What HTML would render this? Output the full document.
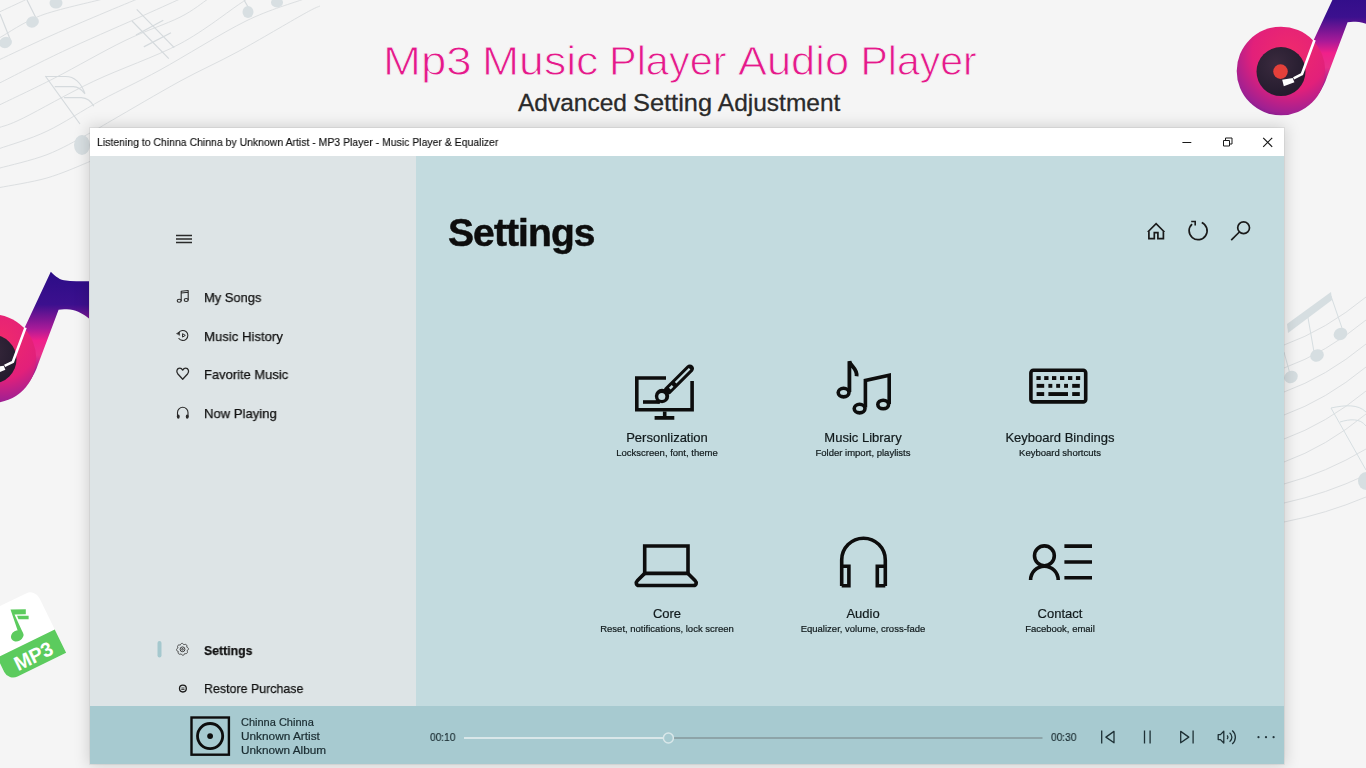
<!DOCTYPE html>
<html><head><meta charset="utf-8">
<style>
html,body{margin:0;padding:0;}
body{width:1366px;height:768px;overflow:hidden;position:relative;background:#f5f5f5;font-family:"Liberation Sans",sans-serif;}
.abs{position:absolute;white-space:nowrap;will-change:transform;}
#bgsvg{position:absolute;left:0;top:0;}
.w1{position:absolute;top:37px;font-size:41px;color:#e5198a;line-height:48px;-webkit-text-stroke:0.9px #f5f5f5;white-space:nowrap;transform-origin:0 0;}
.w2{position:absolute;top:88.7px;font-size:24.5px;color:#2a2a2a;-webkit-text-stroke:0.3px #2a2a2a;line-height:28px;white-space:nowrap;transform-origin:0 0;}
#win{position:absolute;left:90px;top:128px;width:1194px;height:636px;box-shadow:0 0 0 1px rgba(0,0,0,0.05),0 0 14px 2px rgba(0,0,0,0.15);background:#c3dbdf;}
#titlebar{position:absolute;left:0;top:0;width:1194px;height:28px;background:#fff;}
#wtitle{left:7px;top:6.5px;font-size:11.5px;line-height:14px;color:#111;transform:scaleX(0.91);transform-origin:0 0;-webkit-text-stroke:0.15px #111;}
#side{position:absolute;left:0;top:28px;width:326px;height:550px;background:#dde4e6;}
#player{position:absolute;left:0;top:578px;width:1194px;height:58px;background:#a7cad0;}
.nav{font-size:13.5px;line-height:20px;color:#111;transform-origin:0 0;-webkit-text-stroke:0.25px #111;}
.tt{font-size:13px;color:#111a1c;-webkit-text-stroke:0.2px #111a1c;text-align:center;width:200px;}
.ts{font-size:9.5px;color:#111a1c;-webkit-text-stroke:0.2px #111a1c;text-align:center;width:200px;}
.pt{font-size:11px;color:#1a2c31;-webkit-text-stroke:0.2px #1a2c31;}
#icons{position:absolute;left:0;top:0;}
</style></head><body>
<svg id="bgsvg" width="1366" height="768" viewBox="0 0 1366 768">
 <defs>
  <radialGradient id="ringg" cx="0.6" cy="0.3" r="0.85">
   <stop offset="0" stop-color="#f02a6c"/>
   <stop offset="0.5" stop-color="#e2207a"/>
   <stop offset="0.8" stop-color="#a02092"/>
   <stop offset="1" stop-color="#55198a"/>
  </radialGradient>
  <linearGradient id="stemg" x1="0" y1="-90" x2="0" y2="30" gradientUnits="userSpaceOnUse">
   <stop offset="0" stop-color="#2a0c86"/>
   <stop offset="0.3" stop-color="#3c108e"/>
   <stop offset="0.5" stop-color="#a81a98"/>
   <stop offset="0.6" stop-color="#f0208a"/>
   <stop offset="0.72" stop-color="#e8308a"/>
   <stop offset="0.86" stop-color="#9a2090"/>
   <stop offset="1" stop-color="#4a187e"/>
  </linearGradient>
  <radialGradient id="discg" cx="0.4" cy="0.35" r="0.7">
   <stop offset="0" stop-color="#3a2a3e"/>
   <stop offset="1" stop-color="#221a2c"/>
  </radialGradient>
  <g id="logo">
   <path d="M32.5 -30.5L58.8 -86.9C62 -84 66 -79.5 72 -78.3C80 -77 88 -77.5 97 -77.3V-40C92 -44 86 -48 78 -49C73 -49.5 70 -49.5 66.6 -48.8L46 6Q43.5 14 37.5 23L20 20L20 -20Z" fill="url(#stemg)"/>
   <circle cx="0" cy="0" r="44.3" fill="url(#ringg)"/>
   <circle cx="0" cy="0.6" r="24.5" fill="url(#discg)"/>
   <circle cx="-0.5" cy="0.6" r="7.3" fill="#e4403a"/>
   <path d="M33.5 -31L20.9 3.2L12.6 7.3" fill="none" stroke="#fff" stroke-width="2.6" stroke-linejoin="round"/>
   <path d="M1.2 8.8L11.7 7.1L13.4 11.2L2.8 15.3Z" fill="#fff"/>
  </g>
 </defs>
 <!-- staff lines top-left -->
 <g fill="none" stroke="#dcdfe1" stroke-width="1">
  <path d="M0.0 11.7 C3.9 9.9 18.4 3.2 23.4 0.8 C28.4 -1.6 28.9 -2.4 30.0 -3.0"/>
  <path d="M0.0 37.5 C6.8 33.9 23.4 22.0 40.6 15.6 C57.8 9.2 92.6 1.8 103.0 -1.0"/>
  <path d="M0.0 59.4 C7.8 55.8 31.3 44.5 46.9 37.5 C62.5 30.5 78.7 23.6 93.8 17.2 C108.8 10.8 130.2 2.0 137.5 -1.0"/>
  <path d="M0.0 82.8 C10.4 77.6 39.8 62.3 62.5 51.6 C85.2 40.9 116.4 27.5 136.0 18.8 C155.6 10.0 172.7 2.3 180.0 -1.0"/>
  <path d="M0.0 104.7 C9.1 100.2 33.9 88.7 54.7 78.0 C75.5 67.3 104.1 50.7 125.0 40.6 C145.9 30.5 166.2 24.1 180.0 17.2 C193.8 10.3 203.3 2.0 208.0 -1.0"/>
  <path d="M0.0 127.3 C3.9 125.8 7.8 125.7 23.4 118.0 C39.0 110.3 67.7 93.6 93.8 81.2 C119.8 68.9 155.5 56.8 180.0 43.8 C204.5 30.7 229.3 10.6 241.0 3.0 C252.7 -4.6 248.5 -1.2 250.0 -2.0"/>
  <path d="M0.0 148.4 C7.8 145.5 30.0 139.3 46.9 131.2 C63.8 123.2 82.8 110.2 101.6 100.0 C120.4 89.8 135.9 83.2 160.0 70.0 C184.1 56.8 222.0 32.8 246.0 21.0 C270.0 9.2 294.3 2.7 304.0 -1.0"/>
  <path d="M0.0 168.0 C7.8 165.8 32.3 160.3 46.9 154.7 C61.5 149.1 76.6 140.2 87.5 134.4 C98.4 128.6 97.1 128.9 112.5 120.0 C127.9 111.1 159.1 92.7 180.0 81.2 C200.9 69.8 217.4 62.8 238.0 51.6 C258.6 40.4 290.1 21.6 303.8 14.0 C317.4 6.4 317.3 7.3 320.0 6.0"/>
  <path d="M0.0 187.5 C7.8 185.9 32.3 182.2 46.9 178.0 C61.5 173.8 79.5 165.8 87.5 162.5 C95.5 159.2 93.8 158.8 95.0 158.0"/>
 </g>
 <g fill="none" stroke="#d5dadd" stroke-width="1.2">
  <path d="M136.7 9.4L174.2 47.7M132 21L168.8 58.6M136 35L163.3 20.3M143.8 46.9L171 32.8"/>
  <path d="M45.3 76L80 124M45.3 76.5H65.6C72 76.5 80 80 85 93.8M54.7 86.7H73.4C78 87 82 90 85 93.8M64 97.7H81.3C86 98 91 101 93.8 106.3"/>
  <path d="M10 39L0 14M36 18L27 0M251 12L244 0"/>
 </g>
 <g fill="#d8dfe2">
  <ellipse cx="5.5" cy="42.5" rx="6.5" ry="5.5" transform="rotate(-20 5.5 42.5)"/>
  <ellipse cx="32.5" cy="22" rx="6.5" ry="5.5" transform="rotate(-20 32.5 22)"/>
  <ellipse cx="56" cy="3" rx="6.5" ry="5.5"/>
  <ellipse cx="248" cy="12" rx="5.5" ry="6"/>
  <ellipse cx="277" cy="2.5" rx="6" ry="5"/>
  <ellipse cx="82" cy="145" rx="8" ry="10"/>
 </g>
 <!-- staff lines right -->
 <g fill="none" stroke="#dcdfe1" stroke-width="1">
  <path d="M1284 345 Q1326 329.9 1366 297"/>
  <path d="M1284 368 Q1326 352.9 1366 320"/>
  <path d="M1284 392 Q1326 376.9 1366 344"/>
  <path d="M1284 415 Q1326 399.9 1366 367"/>
  <path d="M1284 439 Q1326 423.9 1366 391"/>
  <path d="M1284 462 Q1326 446.9 1366 414"/>
  <path d="M1284 484 Q1326 472.8 1366 449"/>
  <path d="M1284 503 Q1326 493.9 1366 475"/>
  <path d="M1284 522 Q1326 513.8 1366 497"/>
 </g>
 <g fill="#d6dee1">
  <path d="M1287 324L1331 292L1332 300L1288 333Z"/>
  <ellipse cx="1340.5" cy="334" rx="7" ry="6" transform="rotate(-25 1340.5 334)"/>
  <ellipse cx="1317" cy="355.5" rx="7" ry="6" transform="rotate(-25 1317 355.5)"/>
  <ellipse cx="1291" cy="377" rx="7" ry="6" transform="rotate(-25 1291 377)"/>
  <ellipse cx="1366" cy="481" rx="8" ry="9"/>
 </g>
 <g fill="none" stroke="#d6dee1" stroke-width="1">
  <path d="M1331 296L1343 331M1307 312L1314 352M1284 352L1290 374"/>
  <path d="M1331 408L1366 470M1331 408C1345 405 1358 404 1366 412M1340 422C1350 419 1360 418 1366 426"/>
 </g>
 <!-- logos -->
 <use href="#logo" transform="translate(1281 71)"/>
 <use href="#logo" transform="translate(-8 358.6)"/>
</svg>

<svg id="mp3" width="120" height="140" viewBox="0 560 120 140" style="position:absolute;left:0;top:560px;">
 <g transform="translate(35 589) rotate(-26)">
  <path d="M-64 0H-10A10 10 0 0 1 0 10V71H-54A10 10 0 0 1 -64 61Z" fill="#fff"/>
  <path d="M-64 45H0V71H-54A10 10 0 0 1 -64 61Z" fill="#5ccb5e"/>
  <text x="-51" y="66.5" font-family="Liberation Sans" font-weight="bold" font-size="20" fill="#fff" letter-spacing="-0.3">MP3</text>
 </g>
 <g fill="#5ccb5e">
  <path d="M10.5 609.5L25.8 609.3L25.8 614.3L14.5 614.5L22.5 632L19 634.5Z"/>
  <path d="M17 615.8H28.6V619.3H18.5Z"/>
  <ellipse cx="17.2" cy="635.8" rx="6.6" ry="5.3" transform="rotate(-30 17.2 635.8)"/>
 </g>
</svg>
<div id="title1">
 <span class="w1" style="left:383.3px;transform:scaleX(1.112)">Mp3</span>
 <span class="w1" style="left:482.2px;transform:scaleX(1.087)">Music</span>
 <span class="w1" style="left:608.8px;transform:scaleX(1.011)">Player</span>
 <span class="w1" style="left:737.8px;transform:scaleX(1.059)">Audio</span>
 <span class="w1" style="left:860.5px;">Player</span>
</div>
<div id="title2">
 <span class="w2" style="left:518px;">Advanced</span>
 <span class="w2" style="left:633.4px;transform:scaleX(1.036)">Setting</span>
 <span class="w2" style="left:717.8px;">Adjustment</span>
</div>

<div id="win">
  <div id="titlebar"><div class="abs" id="wtitle">Listening to Chinna Chinna by Unknown Artist - MP3 Player - Music Player &amp; Equalizer</div></div>
  <div id="side"></div>
  <div id="player"></div>
</div>

<!-- text in page coords -->
<div class="abs nav" style="left:203.5px;top:288px;transform:scaleX(0.956)">My Songs</div>
<div class="abs nav" style="left:203.5px;top:327px;transform:scaleX(0.974)">Music History</div>
<div class="abs nav" style="left:203.5px;top:365px;transform:scaleX(0.959)">Favorite Music</div>
<div class="abs nav" style="left:203.5px;top:404px;transform:scaleX(0.97)">Now Playing</div>
<div class="abs nav" style="left:204px;top:641px;font-weight:bold;transform:scaleX(0.91)">Settings</div>
<div class="abs nav" style="left:203.5px;top:679px;transform:scaleX(0.92)">Restore Purchase</div>

<div class="abs" style="left:448px;top:211px;font-size:39px;font-weight:bold;color:#0d0d0d;letter-spacing:-0.9px;-webkit-text-stroke:0.5px #0d0d0d;">Settings</div>

<div class="abs tt" style="left:566.5px;top:430px;">Personlization</div>
<div class="abs ts" style="left:566.5px;top:447px;">Lockscreen, font, theme</div>
<div class="abs tt" style="left:763.4px;top:430px;">Music Library</div>
<div class="abs ts" style="left:763.4px;top:447px;">Folder import, playlists</div>
<div class="abs tt" style="left:960.3px;top:430px;">Keyboard Bindings</div>
<div class="abs ts" style="left:960.3px;top:447px;">Keyboard shortcuts</div>
<div class="abs tt" style="left:566.5px;top:606px;">Core</div>
<div class="abs ts" style="left:566.5px;top:623px;">Reset, notifications, lock screen</div>
<div class="abs tt" style="left:763.4px;top:606px;">Audio</div>
<div class="abs ts" style="left:763.4px;top:623px;">Equalizer, volume, cross-fade</div>
<div class="abs tt" style="left:960.3px;top:606px;">Contact</div>
<div class="abs ts" style="left:960.3px;top:623px;">Facebook, email</div>

<div class="abs pt" style="left:241px;top:716px;">Chinna Chinna</div>
<div class="abs pt" style="left:241px;top:730px;transform:scaleX(1.075);transform-origin:0 0;">Unknown Artist</div>
<div class="abs pt" style="left:241px;top:744px;transform:scaleX(1.07);transform-origin:0 0;">Unknown Album</div>
<div class="abs pt" style="left:430px;top:731px;font-size:11.5px;transform:scaleX(0.88);transform-origin:0 0;">00:10</div>
<div class="abs pt" style="left:1051px;top:731px;font-size:11.5px;transform:scaleX(0.88);transform-origin:0 0;">00:30</div>

<svg id="icons" width="1366" height="768" viewBox="0 0 1366 768">
 <g fill="none" stroke="#1a1a1a" stroke-width="1">
  <!-- title bar controls -->
  <path d="M1182.4 142.5H1191.3"/>
  <path d="M1223.5 140.5h6v5.5h-6z M1225.5 140.5v-2.5h6.5v6h-2.5"/>
  <path d="M1263.2 137.8L1272.2 146.8M1272.2 137.8L1263.2 146.8" stroke-width="1.2"/>
 </g>
 <!-- hamburger -->
 <g stroke="#2a2a2a" stroke-width="1.3">
  <path d="M176 235.5H192M176 239H192M176 242.5H192"/>
 </g>
 <!-- nav icons -->
 <g fill="none" stroke="#2a2a2a" stroke-width="1.1" stroke-linecap="round" stroke-linejoin="round">
  <!-- music note -->
  <path d="M181.2 300.5V291.3L188.2 290.5V299.6M181.2 293L188.2 292.3"/>
  <ellipse cx="179.2" cy="300.8" rx="2" ry="1.5"/>
  <ellipse cx="186.2" cy="300" rx="2" ry="1.5"/>
  <!-- history -->
  <path d="M178.8 332.5A5 5 0 1 1 178.9 338.5"/>
  <path d="M176.8 333.4L179.4 332L179.6 335Z" fill="#2a2a2a" stroke-width="0.6"/>
  <path d="M182.9 333.9L185.3 335.4L182.9 336.9Z" stroke-width="1"/>
  <!-- heart -->
  <path d="M182.7 379.2L177.9 374C175.8 371.6 176.9 368.2 179.8 368.2C181.2 368.2 182.1 369.1 182.7 370.1C183.3 369.1 184.2 368.2 185.6 368.2C188.5 368.2 189.6 371.6 187.5 374Z" stroke-width="1.3"/>
  <!-- headphones -->
  <path d="M177.5 417V412.5A5.25 5.25 0 0 1 188 412.5V417"/>
 </g>
 <g fill="#2a2a2a">
  <ellipse cx="178.3" cy="416.6" rx="1.4" ry="2.2"/>
  <ellipse cx="187.2" cy="416.6" rx="1.4" ry="2.2"/>
 </g>
 <!-- gear -->
 <g fill="none" stroke="#3a3a3a" stroke-width="1">
  <path d="M188.35 649.30 L188.26 649.53 L188.13 649.74 L187.97 649.95 L187.79 650.14 L187.58 650.31 L187.35 650.47 L187.12 650.60 L187.06 650.78 L187.18 651.03 L187.28 651.28 L187.36 651.54 L187.41 651.80 L187.43 652.06 L187.42 652.31 L187.37 652.55 L187.29 652.78 L187.17 652.98 L187.02 653.16 L186.84 653.32 L186.64 653.44 L186.41 653.53 L186.17 653.60 L185.91 653.63 L185.65 653.63 L185.38 653.61 L185.11 653.56 L184.84 653.49 L184.68 653.58 L184.59 653.83 L184.48 654.08 L184.35 654.32 L184.20 654.54 L184.03 654.74 L183.85 654.91 L183.64 655.04 L183.43 655.14 L183.20 655.20 L182.97 655.23 L182.73 655.21 L182.50 655.15 L182.27 655.06 L182.06 654.93 L181.85 654.77 L181.66 654.59 L181.49 654.38 L181.33 654.15 L181.20 653.92 L181.02 653.86 L180.77 653.98 L180.52 654.08 L180.26 654.16 L180.00 654.21 L179.74 654.23 L179.49 654.22 L179.25 654.17 L179.02 654.09 L178.82 653.97 L178.64 653.82 L178.48 653.64 L178.36 653.44 L178.27 653.21 L178.20 652.97 L178.17 652.71 L178.17 652.45 L178.19 652.18 L178.24 651.91 L178.31 651.64 L178.22 651.48 L177.97 651.39 L177.72 651.28 L177.48 651.15 L177.26 651.00 L177.06 650.83 L176.89 650.65 L176.76 650.44 L176.66 650.23 L176.60 650.00 L176.57 649.77 L176.59 649.53 L176.65 649.30 L176.74 649.07 L176.87 648.86 L177.03 648.65 L177.21 648.46 L177.42 648.29 L177.65 648.13 L177.88 648.00 L177.94 647.82 L177.82 647.57 L177.72 647.32 L177.64 647.06 L177.59 646.80 L177.57 646.54 L177.58 646.29 L177.63 646.05 L177.71 645.82 L177.83 645.62 L177.98 645.44 L178.16 645.28 L178.36 645.16 L178.59 645.07 L178.83 645.00 L179.09 644.97 L179.35 644.97 L179.62 644.99 L179.89 645.04 L180.16 645.11 L180.32 645.02 L180.41 644.77 L180.52 644.52 L180.65 644.28 L180.80 644.06 L180.97 643.86 L181.15 643.69 L181.36 643.56 L181.57 643.46 L181.80 643.40 L182.03 643.37 L182.27 643.39 L182.50 643.45 L182.73 643.54 L182.94 643.67 L183.15 643.83 L183.34 644.01 L183.51 644.22 L183.67 644.45 L183.80 644.68 L183.98 644.74 L184.23 644.62 L184.48 644.52 L184.74 644.44 L185.00 644.39 L185.26 644.37 L185.51 644.38 L185.75 644.43 L185.98 644.51 L186.18 644.63 L186.36 644.78 L186.52 644.96 L186.64 645.16 L186.73 645.39 L186.80 645.63 L186.83 645.89 L186.83 646.15 L186.81 646.42 L186.76 646.69 L186.69 646.96 L186.78 647.12 L187.03 647.21 L187.28 647.32 L187.52 647.45 L187.74 647.60 L187.94 647.77 L188.11 647.95 L188.24 648.16 L188.34 648.37 L188.40 648.60 L188.43 648.83 L188.41 649.07Z"/>
  <circle cx="182.5" cy="649.3" r="2.4"/><circle cx="182.5" cy="649.3" r="0.8"/>
 </g>
 <!-- restore purchase -->
 <g fill="none" stroke="#1a1a1a" stroke-width="1.3">
  <circle cx="182.9" cy="688.6" r="3.4"/>
 </g>
 <path d="M181.3 688h3.2M181.3 689.5h3.2" stroke="#1a1a1a" stroke-width="0.8"/>
 <!-- settings indicator -->
 <rect x="157.5" y="641" width="4" height="16.5" rx="2" fill="#a5c8ce"/>

 <!-- header icons -->
 <g fill="none" stroke="#1a1a1a" stroke-width="1.7" stroke-linejoin="miter">
  <path d="M1147.8 232L1156.1 223.6L1164.4 232M1148.9 230.8V238.6H1154.3V232.6H1157.9V238.6H1163.4V230.8"/>
  <path d="M1192.08 224.01A9 9 0 1 0 1201.76 222.48"/>
  <path d="M1191.2 221.5H1195.2V225.5" stroke-width="1.6"/>
  <circle cx="1243.6" cy="227.8" r="5.9"/>
  <path d="M1239.4 232L1231.2 240.2"/>
 </g>

 <!-- tile icons -->
 <g fill="none" stroke="#0d0d0d" stroke-width="3.6" stroke-linecap="butt" stroke-linejoin="miter">
  <!-- personalization -->
  <path d="M666 378H636.8V409.7H692.1V381"/>
  <path d="M664.7 411.5V417.9M654.6 417.9H674.3"/>
  <path d="M643 402H659"/>
  <path d="M689.8 368.6L668 390.4" stroke-width="8.4" stroke-linecap="round"/>
  <circle cx="662" cy="396" r="7.2" fill="#0d0d0d" stroke="none"/>
  <path d="M656 400.5C657 402 658 402.5 660 402.3" stroke-width="3"/>
 </g>
 <g fill="none" stroke="#c3dbdf">
  <path d="M689.6 368.8L675.6 382.8" stroke-width="2.2" stroke-linecap="butt"/>
  <path d="M672.6 385.8L669.8 388.6" stroke-width="2.4"/>
  <circle cx="661.8" cy="396.6" r="3.5" fill="#c3dbdf" stroke="none"/>
 </g>
 <g fill="none" stroke="#0d0d0d" stroke-width="3.6" stroke-linecap="butt" stroke-linejoin="miter">
  <!-- music library -->
  <ellipse cx="843.6" cy="392.6" rx="5.4" ry="4.3"/>
  <path d="M849.4 392V361.2C850.5 366.5 857.5 368.5 856.6 376.2" stroke-width="3.8"/>
  <ellipse cx="859.6" cy="408.6" rx="5.4" ry="4.3"/>
  <ellipse cx="883.2" cy="404.5" rx="5.4" ry="4.3"/>
  <path d="M865.4 407.5V380.5L889.2 375.3V404"/>
  <!-- keyboard -->
  <rect x="1030.9" y="370.2" width="54.8" height="31.7" rx="2.5"/>
  <!-- core laptop -->
  <path d="M644.7 573.4V546H688V573.4Z"/>
  <path d="M644.7 573.4L637.5 580.5C635.5 582.5 636 585.5 639 585.5H693.5C696.5 585.5 697 582.5 695 580.5L688 573.4"/>
  <!-- audio headphones -->
  <path d="M841.7 586V560A21.8 21.8 0 0 1 885.3 560V586"/>
  <path d="M841.7 566.2H848.9V585.7H841.7 M885.3 566.2H877.3V585.7H885.3"/>
  <!-- contact -->
  <circle cx="1044.4" cy="555.8" r="9.9"/>
  <path d="M1030.6 580A13.8 13.8 0 0 1 1058.2 580"/>
  <path d="M1064.4 546.1H1092M1064.4 562H1092M1064.4 577.8H1092"/>
 </g>
 <g fill="#0d0d0d">
  <rect x="1036.4" y="376.1" width="4.3" height="3.9"/><rect x="1044.2" y="376.1" width="4.3" height="3.9"/><rect x="1052" y="376.1" width="4.3" height="3.9"/><rect x="1060" y="376.1" width="4.3" height="3.9"/><rect x="1068" y="376.1" width="4.3" height="3.9"/><rect x="1075.9" y="376.1" width="4.3" height="3.9"/>
  <rect x="1036.6" y="383.9" width="7.6" height="3.9"/><rect x="1048.4" y="383.9" width="3.9" height="3.9"/><rect x="1056.2" y="383.9" width="3.9" height="3.9"/><rect x="1064.1" y="383.9" width="3.9" height="3.9"/><rect x="1072.2" y="383.9" width="7.6" height="3.9"/>
  <rect x="1036.6" y="392.1" width="7.6" height="3.9"/><rect x="1048.4" y="392.1" width="19.6" height="3.9"/><rect x="1072.2" y="392.1" width="7.6" height="3.9"/>
 </g>

 <!-- player bar -->
 <g fill="none" stroke="#0d0d0d">
  <rect x="191.5" y="717.5" width="37.4" height="37.2" stroke-width="2.4"/>
  <circle cx="210.1" cy="736.1" r="12.6" stroke-width="2.8"/>
 </g>
 <circle cx="210.1" cy="736.1" r="2.9" fill="#0d0d0d"/>
 <path d="M464 738H663" stroke="#d9e7e9" stroke-width="2"/>
 <path d="M674 738H1042.5" stroke="#8da4a8" stroke-width="2"/>
 <circle cx="668.4" cy="738" r="5" fill="#a7cad0" stroke="#d9e7e9" stroke-width="1.5"/>
 <g fill="none" stroke="#1e3035" stroke-width="1.3" stroke-linejoin="round">
  <path d="M1101.7 730.5V743.5"/>
  <path d="M1114 731.4V742.8L1105.9 737.1Z"/>
  <path d="M1144.5 730.5V743.5M1150.1 730.5V743.5"/>
  <path d="M1180.7 731.4V742.8L1188.8 737.1Z"/>
  <path d="M1193.1 730.5V743.5"/>
  <path d="M1218.2 734.6H1220.4L1223.8 731.2V743L1220.4 739.6H1218.2Z"/>
  <path d="M1227 735.5A2.2 2.2 0 0 1 1227 739"/>
  <path d="M1229.6 732.8A5.5 5.5 0 0 1 1229.6 741.7"/>
  <path d="M1232.2 730.5A8.8 8.8 0 0 1 1232.2 744"/>
 </g>
 <g fill="#22343a">
  <circle cx="1258.5" cy="737.2" r="1.1"/><circle cx="1266" cy="737.2" r="1.1"/><circle cx="1273.6" cy="737.2" r="1.1"/>
 </g>
</svg>
</body></html>
